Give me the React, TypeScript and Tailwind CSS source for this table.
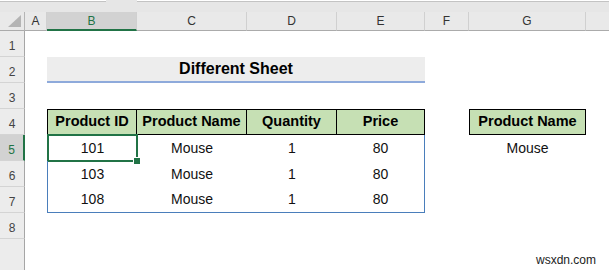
import type { ReactNode } from "react";
import clsx from "clsx";

// column widths of the visible sheet
const W = {
  A: "w-[22px]",
  B: "w-[90px]",
  C: "w-[110px]",
  D: "w-[90px]",
  E: "w-[88px]",
  F: "w-[44px]",
  G: "w-[117px]",
};

const letters: { key: keyof typeof W; active?: boolean }[] = [
  { key: "A" },
  { key: "B", active: true },
  { key: "C" },
  { key: "D" },
  { key: "E" },
  { key: "F" },
  { key: "G" },
];

const rows = [
  { id: "101", name: "Mouse", qty: "1", price: "80" },
  { id: "103", name: "Mouse", qty: "1", price: "80" },
  { id: "108", name: "Mouse", qty: "1", price: "80" },
];

function Row({ n, active, children, tall }: { n?: number; active?: boolean; children?: ReactNode; tall?: boolean }) {
  return (
    <div className={clsx("flex shrink-0", tall ? "h-[40px]" : "h-[26px]")}>
      <div
        className={clsx(
          "w-[25px] shrink-0 flex items-end justify-center pb-[4px] text-[12px] leading-none",
          n ? "border-b border-b-[#d4d4d4]" : "",
          active
            ? "bg-[#d2d2d2] text-[#217346] border-r-2 border-r-[#217346]"
            : "bg-[#ececec] text-[#444] border-r border-r-[#a6a6a6]"
        )}
      >
        {n}
      </div>
      {children}
    </div>
  );
}

function HeadCell({ w, first, children }: { w: string; first?: boolean; children: ReactNode }) {
  return (
    <div
      className={clsx(
        w,
        "shrink-0 flex items-center justify-center bg-[#c6e0b4] font-bold text-[14.5px] text-black border-y border-r border-black",
        first && "border-l"
      )}
    >
      {children}
    </div>
  );
}

export default function App() {
  return (
    <div className="relative w-[609px] h-[270px] overflow-hidden bg-white font-['Liberation_Sans',Arial,sans-serif] text-[#111]">
      {/* formula bar remnant */}
      <div className="h-[12px] bg-[#e6e6e6] flex items-start">
        <div className="w-[106px] h-[2px] bg-white border-b border-[#c3c3c3]" />
        <div className="w-[31px]" />
        <div className="flex-1 h-[2px] bg-white border-b border-[#c3c3c3]" />
      </div>

      {/* column letters */}
      <div className="flex h-[19px] bg-[#e9e9e9] text-[12px] text-[#333]">
        <div className="w-[25px] shrink-0 flex items-end justify-end pr-[3px] pb-[3px] border-r border-[#b5b5b5] border-b border-b-[#ababab]">
          <svg width="13" height="12" viewBox="0 0 13 12">
            <polygon points="13,0 13,12 0,12" fill="#b4b4b4" />
          </svg>
        </div>
        {letters.map((l) => (
          <div
            key={l.key}
            className={clsx(
              W[l.key],
              "shrink-0 flex items-center justify-center border-r border-r-[#d0d0d0]",
              l.active ? "bg-[#d2d2d2] text-[#217346] border-b-2 border-b-[#217346]" : "border-b border-b-[#ababab]"
            )}
          >
            {l.key}
          </div>
        ))}
        <div className="flex-1 border-b border-b-[#ababab]" />
      </div>

      <Row n={1} />
      <Row n={2}>
        <div className={W.A} />
        <div className="w-[378px] shrink-0 flex items-center justify-center bg-[#ededed] border-b-2 border-[#8eaadb] font-bold text-[16px] text-black">
          Different Sheet
        </div>
      </Row>
      <Row n={3} />
      <Row n={4}>
        <div className={W.A} />
        <HeadCell w={W.B} first>
          Product ID
        </HeadCell>
        <HeadCell w={W.C}>Product Name</HeadCell>
        <HeadCell w={W.D}>Quantity</HeadCell>
        <HeadCell w={W.E}>Price</HeadCell>
        <div className={clsx(W.F, "shrink-0")} />
        <HeadCell w={W.G} first>
          Product Name
        </HeadCell>
      </Row>
      {rows.map((r, i) => {
        const last = i === rows.length - 1;
        const edge = last ? "border-b border-b-[#4a7ebb]" : "";
        return (
          <Row key={r.id} n={5 + i} active={i === 0}>
            <div className={W.A} />
            <div className={clsx(W.B, "relative shrink-0 flex items-center justify-center text-[14px] border-l border-l-[#4a7ebb]", edge)}>
              {r.id}
              {i === 0 && (
                <>
                  <div className="absolute -left-[1px] -top-[1px] -right-[1px] -bottom-[1px] border-2 border-[#217346]" />
                  <div className="absolute -right-[3px] -bottom-[3px] w-[6px] h-[6px] bg-[#217346] outline outline-1 outline-white" />
                </>
              )}
            </div>
            <div className={clsx(W.C, "shrink-0 flex items-center justify-center text-[14px]", edge)}>{r.name}</div>
            <div className={clsx(W.D, "shrink-0 flex items-center justify-center text-[14px]", edge)}>{r.qty}</div>
            <div className={clsx(W.E, "shrink-0 flex items-center justify-center text-[14px] border-r border-r-[#4a7ebb]", edge)}>
              {r.price}
            </div>
            {i === 0 && (
              <>
                <div className={clsx(W.F, "shrink-0")} />
                <div className={clsx(W.G, "shrink-0 flex items-center justify-center text-[14px]")}>{r.name}</div>
              </>
            )}
          </Row>
        );
      })}
      <Row n={8} />
      <Row tall />

      <div className="absolute left-[536px] top-[254px] text-[12px] leading-none text-[#222]">wsxdn.com</div>
    </div>
  );
}
